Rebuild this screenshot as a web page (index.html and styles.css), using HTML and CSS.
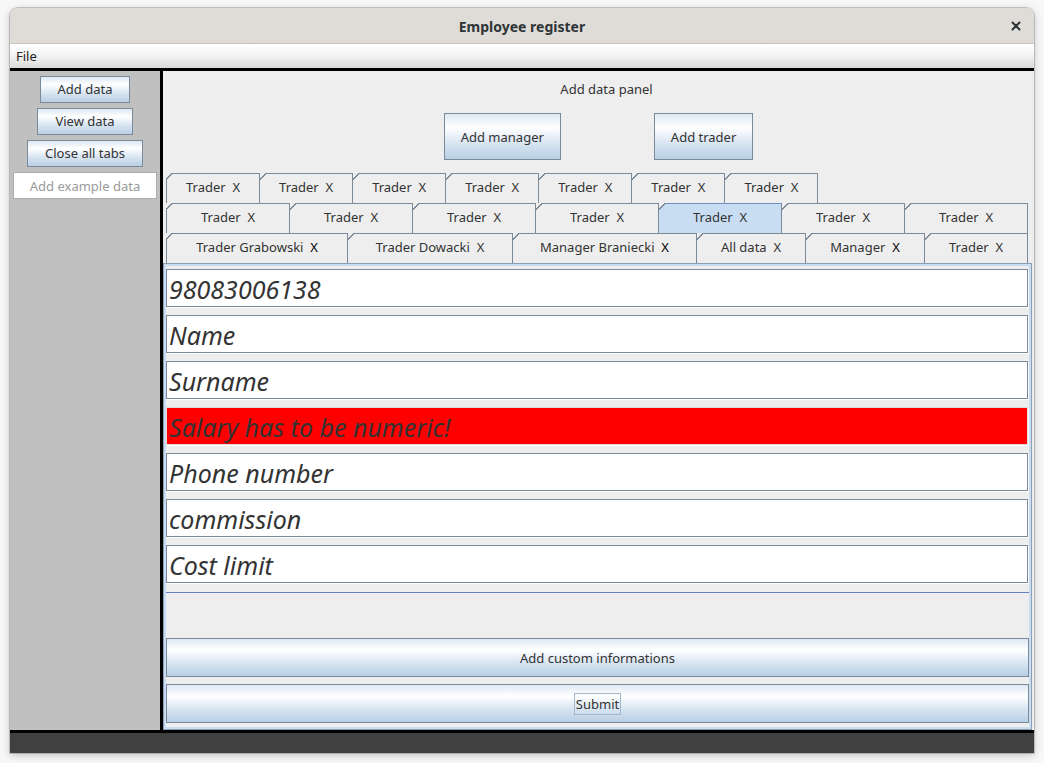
FILE: index.html
```html
<!DOCTYPE html>
<html lang="en">
<head>
<meta charset="utf-8">
<title>Employee register</title>
<link rel="stylesheet" href="styles.css">
</head>
<body>
<div class="window">
  <header class="titlebar">
    <span></span>
    <span class="title">Employee register</span>
    <span class="close" aria-label="Close">
      <svg width="10" height="10" viewBox="0 0 10 10"><path d="M1.5 1.5 L8.5 8.5 M8.5 1.5 L1.5 8.5" stroke="#2e3436" stroke-width="2" stroke-linecap="round"/></svg>
    </span>
  </header>
  <nav class="menubar"><span class="menu-item">File</span></nav>
  <div class="body">
    <aside class="sidebar">
      <button class="btn side-btn">Add data</button>
      <button class="btn side-btn">View data</button>
      <button class="btn side-btn">Close all tabs</button>
      <input class="example" type="text" placeholder="Add example data">
    </aside>
    <main class="main">
      <div class="panel-label">Add data panel</div>
      <div class="actions">
        <button class="btn big-btn">Add manager</button>
        <button class="btn big-btn">Add trader</button>
      </div>
      <div class="tabs">
        <div class="tab-row row-top">
          <div class="tab">Trader  X</div>
          <div class="tab">Trader  X</div>
          <div class="tab">Trader  X</div>
          <div class="tab">Trader  X</div>
          <div class="tab">Trader  X</div>
          <div class="tab">Trader  X</div>
          <div class="tab">Trader  X</div>
        </div>
        <div class="tab-row row-fill">
          <div class="tab">Trader  X</div>
          <div class="tab">Trader  X</div>
          <div class="tab">Trader  X</div>
          <div class="tab">Trader  X</div>
          <div class="tab selected">Trader  X</div>
          <div class="tab">Trader  X</div>
          <div class="tab">Trader  X</div>
        </div>
        <div class="tab-row row-names">
          <div class="tab">Trader Grabowski  <span class="x-dark">X</span></div>
          <div class="tab">Trader Dowacki  X</div>
          <div class="tab">Manager Braniecki  <span class="x-dark">X</span></div>
          <div class="tab">All data  X</div>
          <div class="tab">Manager  <span class="x-dark">X</span></div>
          <div class="tab">Trader  X</div>
        </div>
      </div>
      <section class="content">
        <div class="fields">
          <div class="field">98083006138</div>
          <div class="field">Name</div>
          <div class="field">Surname</div>
          <div class="field error">Salary has to be numeric!</div>
          <div class="field">Phone number</div>
          <div class="field">commission</div>
          <div class="field">Cost limit</div>
        </div>
        <div class="spacer"></div>
        <div class="bottom-buttons">
          <button class="btn wide-btn">Add custom informations</button>
          <button class="btn wide-btn"><span class="focus">Submit</span></button>
        </div>
      </section>
    </main>
  </div>
  <footer class="statusbar"></footer>
</div>
</body>
</html>
```

FILE: styles.css
```css
* { box-sizing: border-box; }

html, body { margin: 0; padding: 0; }

body {
  width: 1044px;
  height: 763px;
  overflow: hidden;
  background: #f7f7f7;
  font-family: "Noto Sans", "Open Sans", "DejaVu Sans", sans-serif;
  color: #333333;
}

.window {
  margin: 8px 0 0 10px;
  width: 1024px;
  height: 745px;
  display: flex;
  flex-direction: column;
  border-radius: 8px 8px 0 0;
  overflow: hidden;
  background: #eeeeee;
  box-shadow: 0 0 0 1px rgba(0, 0, 0, 0.18), 0 2px 8px rgba(0, 0, 0, 0.22);
}

/* title bar */
.titlebar {
  flex: none;
  height: 36px;
  background: #dfdcd8;
  border-bottom: 1px solid #c7c4c0;
  display: grid;
  grid-template-columns: 1fr auto 1fr;
  align-items: center;
  padding-top: 1px;
}

.title {
  font-size: 14px;
  font-weight: 700;
  color: #2e3436;
}

.close {
  justify-self: end;
  margin-right: 13px;
  display: flex;
  align-items: center;
}

/* menu bar */
.menubar {
  flex: none;
  height: 24px;
  background: linear-gradient(#ffffff, #f6f6f6 40%, #dadada);
  display: flex;
  align-items: center;
  padding-left: 6px;
}

.menu-item {
  font-size: 13px;
  color: #222;
}

/* body */
.body {
  flex: 1;
  display: flex;
  border-top: 3px solid #000;
  min-height: 0;
}

.sidebar {
  flex: none;
  width: 153px;
  background: #c0c0c0;
  border-right: 3px solid #000;
  display: flex;
  flex-direction: column;
  align-items: center;
  gap: 5px;
  padding-top: 5px;
}

.btn {
  font-family: inherit;
  font-size: 13px;
  color: #333333;
  border: 1px solid #7a8a99;
  padding: 0 16px;
  margin: 0;
  background: linear-gradient(to bottom, #dde8f3 0%, #ffffff 30%, #dde8f3 60%, #b8cfe5 100%);
  cursor: default;
}

.side-btn {
  height: 27px;
  padding: 0 17px 1px;
}

.example {
  width: 144px;
  height: 27px;
  margin: 0;
  border: 1px solid #a7adb3;
  background: #ffffff;
  font-family: inherit;
  font-size: 13px;
  text-align: center;
  padding: 0;
  outline: none;
}

.example::placeholder {
  color: #9a9a9a;
  opacity: 1;
}

.main {
  flex: 1;
  display: flex;
  flex-direction: column;
  padding-top: 9px;
  background: #eeeeee;
  min-width: 0;
}

.panel-label {
  text-align: center;
  font-size: 13px;
  line-height: 18px;
  padding-left: 16px;
}

.actions {
  display: flex;
  justify-content: center;
  gap: 93px;
  margin-top: 15px;
}

.big-btn {
  height: 47px;
}

/* tabs */
.tabs {
  margin: 13px 6px 0 3px;
}

.tab-row {
  display: flex;
}

.tab {
  position: relative;
  height: 30px;
  border-top: 1px solid #7a8a99;
  border-right: 1px solid #7a8a99;
  background: #eeeeee;
  font-size: 13px;
  color: #333333;
  white-space: pre;
  display: flex;
  align-items: center;
  justify-content: center;
  padding-bottom: 3px;
}

.tab::before {
  content: "";
  position: absolute;
  top: -1px;
  left: 0;
  width: 7px;
  height: 7px;
  background: linear-gradient(to bottom right, #eeeeee 0, #eeeeee calc(50% - 0.8px), #7a8a99 calc(50% - 0.8px), #7a8a99 calc(50% + 0.6px), transparent calc(50% + 0.6px));
}

.tab:first-child {
  border-left: 1px solid #7a8a99;
}

.tab:first-child::before {
  left: -1px;
}

.row-top .tab {
  flex: none;
  padding-left: 19px;
  padding-right: 19px;
}

.row-fill .tab {
  flex: 1 1 auto;
  padding-left: 10px;
  padding-right: 10px;
}

.tab-row.row-names {
  display: grid;
  grid-template-columns: 182fr 165fr 184fr 109fr 119fr 103fr;
}

.tab.selected {
  background: #c8ddf2;
  border-top-color: #6f8fc6;
}

.x-dark {
  color: #000;
}

/* content */
.content {
  flex: 1;
  display: flex;
  flex-direction: column;
  margin-right: 2px;
  border: 1px solid #8d9fb3;
  padding: 2px;
  box-shadow: inset 0 0 0 2px #c8ddf2;
  background: #eeeeee;
}

.fields {
  display: flex;
  flex-direction: column;
  gap: 8px;
  padding: 3px 1px 9px 0;
  border-bottom: 1px solid #6382bf;
}

.field {
  height: 38px;
  background: #ffffff;
  border: 1px solid #7a8a99;
  box-shadow: 1px 1px 0 #ffffff;
  font-size: 25px;
  font-style: italic;
  line-height: 34px;
  padding: 2px 0 0 2px;
  color: #333333;
  white-space: nowrap;
}

.field.error {
  background: #ff0000;
  border-color: #dcdcdc;
}

.spacer {
  flex: 1;
}

.bottom-buttons {
  display: flex;
  flex-direction: column;
  gap: 7px;
  padding-bottom: 4px;
}

.wide-btn {
  height: 39px;
  width: 100%;
}

.focus {
  border: 1px solid #a3b8cc;
  padding: 1px 1px;
  line-height: 15px;
}

.statusbar {
  flex: none;
  height: 23px;
  background: #404040;
  border-top: 3px solid #000;
}
```
